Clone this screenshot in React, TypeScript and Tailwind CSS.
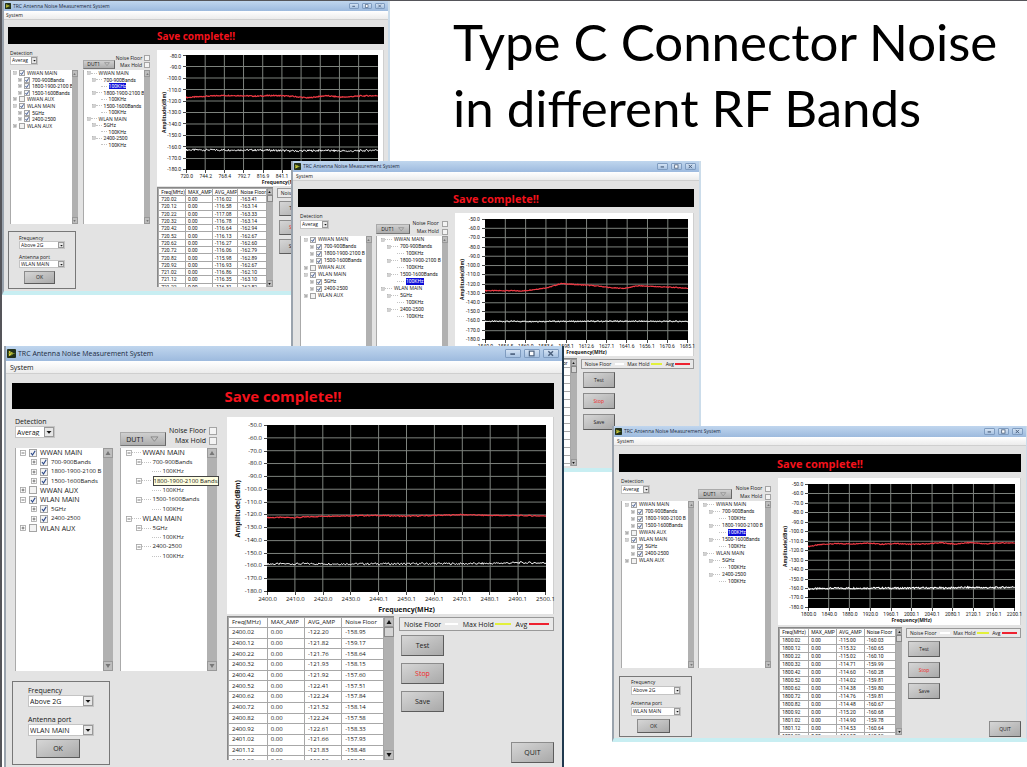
import { useId } from "react"
import clsx from "clsx"

type Size = "sm" | "md" | "lg"

type Reading = [avg: string, noise: string]

interface Capture {
  id: string
  size: Size
  frame: string
  chart: string
  plot: string
  listHeight: string
  firstFreq: number
  yLabels: string[]
  xLabels: string[]
  avgTrace: number[]
  noiseTrace: number[]
  jitter: number
  readings: Reading[]
  selected?: number
  tooltip?: number
}

// One set of measurements per zoom level of the captured window
const sizes = {
  lg: {
    text: "text-[7px] leading-[9px]",
    num: "text-[6px] leading-[9px]",
    title: "h-[15px] pl-[1px] gap-[2px]",
    titleButton: "w-[16px] h-[9px]",
    logo: "size-[9px]",
    menu: "h-[13px] pl-[4px]",
    body: "pl-[6px] pr-[8px] pt-[9px]",
    banner: "h-[26px] text-[15px]",
    columns: "mt-[8px] gap-[10px]",
    lists: "gap-[7px] pl-[3px]",
    listHead: "h-[31px]",
    detection: "w-[40px] h-[12px]",
    dut: "w-[46px] h-[14px] text-[7px] mb-[2px]",
    flags: "pt-[9px] gap-[1px]",
    flag: "gap-[3px]",
    box: "size-[8px]",
    leftTree: "h-[85px] pl-[4px]",
    rightTree: "h-[113px] pl-[5px]",
    treeIndent: "w-[10px]",
    treeGap: "gap-[3px]",
    stub: "w-[9px]",
    expander: "size-[6px]",
    scroll: "w-[10px]",
    scrollButton: "h-[10px]",
    port: "mt-[10px] h-[84px] pl-[15px] pt-[4px]",
    portSelect: "w-[66px] h-[12px]",
    portGap: "mt-[8px]",
    ok: "w-[44px] h-[19px] mt-[3px] ml-[8px]",
    chart: "pt-[8px] pr-[7px]",
    gutter: "w-[40px]",
    ampLabel: "w-[14px] ml-[4px]",
    xLabels: "ml-[40px] h-[13px]",
    xTitle: "ml-[40px]",
    lower: "mt-[2px] h-[147px] gap-[5px]",
    tableBox: "h-[144px]",
    table: "h-[150px]",
    cell: "pl-[3px]",
    legend: "h-[14px] mt-[1px] px-[4px]",
    buttons: "mt-[4px] ml-[2px] gap-[7px]",
    button: "w-[43px] h-[21px] text-[7px]",
  },
  md: {
    text: "text-[5px] leading-[7px]",
    num: "font-['Roboto','Open_Sans',sans-serif] text-[5px] leading-[7px]",
    title: "h-[11px] pl-[1px] gap-[2px]",
    titleButton: "w-[11px] h-[7px]",
    logo: "size-[7px]",
    menu: "h-[9px] pl-[3px]",
    body: "px-[5px] pt-[8px]",
    banner: "h-[18px] text-[11px]",
    columns: "mt-[6px] gap-[7px]",
    lists: "gap-[4px] pl-[2px]",
    listHead: "h-[23px]",
    detection: "w-[29px] h-[9px]",
    dut: "w-[34px] h-[10px] text-[5px] mb-[2px]",
    flags: "pt-[7px] gap-[1px]",
    flag: "gap-[3px]",
    box: "size-[6px]",
    leftTree: "h-[63px] pl-[3px]",
    rightTree: "h-[84px] pl-[4px]",
    treeIndent: "w-[6px]",
    treeGap: "gap-[2px]",
    stub: "w-[7px]",
    expander: "size-[4px]",
    scroll: "w-[6px]",
    scrollButton: "h-[7px]",
    port: "mt-[8px] h-[61px] pl-[11px] pt-[2px]",
    portSelect: "w-[50px] h-[9px]",
    portGap: "mt-[5px]",
    ok: "w-[33px] h-[14px] mt-[3px] ml-[6px]",
    chart: "pt-[6px] pr-[5px]",
    gutter: "w-[30px]",
    ampLabel: "w-[9px] ml-[4px]",
    xLabels: "ml-[30px] h-[9px]",
    xTitle: "ml-[30px]",
    lower: "mt-[2px] h-[110px] gap-[4px]",
    tableBox: "h-[108px]",
    table: "h-[111px]",
    cell: "pl-[2px]",
    legend: "h-[10px] mt-[1px] px-[3px]",
    buttons: "mt-[3px] ml-[2px] gap-[5px]",
    button: "w-[32px] h-[16px] text-[5px]",
  },
  sm: {
    text: "text-[5px] leading-[6px]",
    num: "font-['Roboto','Open_Sans',sans-serif] text-[5px] leading-[6px]",
    title: "h-[10px] pl-[1px] gap-[2px]",
    titleButton: "w-[10px] h-[6px]",
    logo: "size-[6px]",
    menu: "h-[9px] pl-[2px]",
    body: "px-[4px] pt-[7px]",
    banner: "h-[17px] text-[10px]",
    columns: "mt-[6px] gap-[7px]",
    lists: "gap-[5px] pl-[2px]",
    listHead: "h-[20px]",
    detection: "w-[28px] h-[9px]",
    dut: "w-[32px] h-[9px] text-[5px] mb-[1px]",
    flags: "pt-[5px] gap-[1px]",
    flag: "gap-[2px]",
    box: "size-[6px]",
    leftTree: "h-[59px] pl-[2px]",
    rightTree: "h-[78px] pl-[3px]",
    treeIndent: "w-[5px]",
    treeGap: "gap-[2px]",
    stub: "w-[6px]",
    expander: "size-[4px]",
    scroll: "w-[6px]",
    scrollButton: "h-[7px]",
    port: "mt-[7px] h-[58px] pl-[10px] pt-[3px]",
    portSelect: "w-[46px] h-[8px]",
    portGap: "mt-[5px]",
    ok: "w-[31px] h-[13px] mt-[3px] ml-[5px]",
    chart: "pt-[5px] pr-[5px]",
    gutter: "w-[29px]",
    ampLabel: "w-[9px] ml-[3px]",
    xLabels: "ml-[29px] h-[9px]",
    xTitle: "ml-[29px]",
    lower: "mt-[1px] h-[101px] gap-[4px]",
    tableBox: "h-[100px]",
    table: "h-[103px]",
    cell: "pl-[2px]",
    legend: "h-[10px] mt-[1px] px-[3px]",
    buttons: "mt-[3px] ml-[2px] gap-[4px]",
    button: "w-[31px] h-[15px] text-[5px]",
  },
}

type Sizes = (typeof sizes)["lg"]

const fullScale = [50, 60, 70, 80, 90, 100, 110, 120, 130, 140, 150, 160, 170, 180].map((v) => `-${v}.0`)

const captures: Capture[] = [
  {
    id: "720",
    size: "sm",
    frame: "left-[2px] top-[1px] w-[388px] h-[294px]",
    chart: "h-[136px]",
    plot: "h-[115px]",
    listHeight: "h-[154px]",
    firstFreq: 720.02,
    yLabels: fullScale.slice(3),
    xLabels: ["720.0", "744.2", "768.4", "792.7", "816.9", "841.1", "865.3", "889.5", "913.8", "938.0", "962.2"],
    avgTrace: [-117, -116, -115.2, -115.3, -115.8, -115.2, -115.8, -117.3, -115.4, -116.7, -115.6, -115.4],
    noiseTrace: [-162.5, -162.6, -162.6, -162.8, -163.5, -163, -163.6, -162.6],
    jitter: 0.9,
    readings: [
      ["-116.02", "-163.41"],
      ["-116.58", "-163.14"],
      ["-117.08", "-163.33"],
      ["-116.78", "-163.14"],
      ["-116.64", "-162.94"],
      ["-116.13", "-162.67"],
      ["-116.27", "-162.60"],
      ["-116.06", "-162.79"],
      ["-115.98", "-162.89"],
      ["-116.93", "-162.67"],
      ["-116.86", "-162.10"],
      ["-116.35", "-163.10"],
      ["-116.31", "-162.82"],
    ],
    selected: 2,
  },
  {
    id: "1500",
    size: "md",
    frame: "left-[291px] top-[161px] w-[410px] h-[311px]",
    chart: "h-[143px]",
    plot: "h-[121px]",
    listHeight: "h-[165px]",
    firstFreq: 1540.02,
    yLabels: fullScale,
    xLabels: ["1540.0", "1554.5", "1569.0", "1583.6", "1598.1", "1612.6", "1627.1", "1641.6", "1656.1", "1670.6", "1685.1"],
    avgTrace: [-127, -127, -127, -127.3, -125.5, -123.5, -119.3, -120.3, -121, -122.2, -124, -124.5, -121.8, -122.3, -123, -123.5, -124.5],
    noiseTrace: [-160, -160, -160, -160, -159.8, -160, -160],
    jitter: 0.8,
    readings: Array.from({ length: 13 }, () => ["", ""] as Reading),
    selected: 6,
  },
  {
    id: "2400",
    size: "lg",
    frame: "left-[4px] top-[346px] w-[560px] h-[430px]",
    chart: "h-[197px]",
    plot: "h-[167px]",
    listHeight: "h-[223px]",
    firstFreq: 2400.02,
    yLabels: fullScale,
    xLabels: ["2400.0", "2410.0", "2420.0", "2430.0", "2440.1", "2450.1", "2460.1", "2470.1", "2480.1", "2490.1", "2500.1"],
    avgTrace: [-122, -122, -121, -120.6, -120.4, -121, -120.4, -119.8, -120.4, -120.5, -120.8],
    noiseTrace: [-158.2, -158.1, -158, -158.1, -158, -158.1, -157.9, -158, -157.8, -157.2, -157.4],
    jitter: 0.8,
    readings: [
      ["-122.20", "-158.95"],
      ["-121.82", "-159.17"],
      ["-121.76", "-158.64"],
      ["-121.93", "-158.15"],
      ["-121.92", "-157.60"],
      ["-122.41", "-157.51"],
      ["-122.24", "-157.84"],
      ["-121.52", "-158.14"],
      ["-122.24", "-157.58"],
      ["-122.61", "-158.33"],
      ["-121.66", "-157.93"],
      ["-121.83", "-158.48"],
      ["-122.50", "-158.91"],
    ],
    tooltip: 3,
  },
  {
    id: "1800",
    size: "md",
    frame: "left-[612px] top-[426px] w-[416px] h-[316px]",
    chart: "h-[147px]",
    plot: "h-[124px]",
    listHeight: "h-[167px]",
    firstFreq: 1800.02,
    yLabels: fullScale,
    xLabels: ["1800.0", "1840.0", "1880.0", "1920.0", "1960.1", "2000.1", "2040.1", "2080.1", "2120.1", "2160.1", "2200.1"],
    avgTrace: [-115.5, -113.2, -112.5, -112.8, -111.8, -113.2, -112.4, -113.2, -112.8, -111.6, -113, -111.4, -112.8, -111.8, -111.8],
    noiseTrace: [-160, -159.3, -159.2, -159, -159.2, -158.9, -159, -158.4, -158.8, -158],
    jitter: 0.9,
    readings: [
      ["-115.00", "-160.03"],
      ["-115.32", "-160.65"],
      ["-115.02", "-160.10"],
      ["-114.71", "-159.99"],
      ["-114.60", "-160.28"],
      ["-114.02", "-159.81"],
      ["-114.38", "-159.80"],
      ["-114.76", "-159.81"],
      ["-114.48", "-160.67"],
      ["-115.20", "-160.68"],
      ["-114.90", "-159.78"],
      ["-114.53", "-160.64"],
      ["-114.98", "-160.12"],
    ],
    selected: 4,
  },
]

const bands = [
  { level: 0, label: "WWAN MAIN", checked: true },
  { level: 1, label: "700-900Bands", checked: true },
  { level: 1, label: "1800-1900-2100 B", checked: true },
  { level: 1, label: "1500-1600Bands", checked: true },
  { level: 0, label: "WWAN AUX", checked: false },
  { level: 0, label: "WLAN MAIN", checked: true },
  { level: 1, label: "5GHz", checked: true },
  { level: 1, label: "2400-2500", checked: true },
  { level: 0, label: "WLAN AUX", checked: false },
]

const ports = [
  { level: 0, label: "WWAN MAIN" },
  { level: 1, label: "700-900Bands" },
  { level: 2, label: "100KHz" },
  { level: 1, label: "1800-1900-2100 B" },
  { level: 2, label: "100KHz" },
  { level: 1, label: "1500-1600Bands" },
  { level: 2, label: "100KHz" },
  { level: 0, label: "WLAN MAIN" },
  { level: 1, label: "5GHz" },
  { level: 2, label: "100KHz" },
  { level: 1, label: "2400-2500" },
  { level: 2, label: "100KHz" },
]

// Smooth curve through the given levels with a repeatable measurement jitter
function tracePoints(levels: number[], top: number, bottom: number, jitter: number) {
  const steps = 280
  return Array.from({ length: steps + 1 }, (_, i) => {
    const pos = (i / steps) * (levels.length - 1)
    const k = Math.min(Math.floor(pos), levels.length - 2)
    const level = levels[k] + (levels[k + 1] - levels[k]) * (pos - k)
    const noise = Math.sin(i * 12.9898) * 43758.5453
    const value = level + (noise - Math.floor(noise) - 0.5) * 2 * jitter
    return `${((i / steps) * 100).toFixed(2)},${(((top - value) / (top - bottom)) * 100).toFixed(2)}`
  }).join(" ")
}

function Expander({ s, open }: { s: Sizes; open: boolean }) {
  return (
    <svg viewBox="0 0 6 6" className={clsx("shrink-0", s.expander)}>
      <rect x="0.5" y="0.5" width="5" height="5" fill="#fff" stroke="#a3a3a3" strokeWidth="0.8" />
      <path d={open ? "M1.5 3h3" : "M1.5 3h3M3 1.5v3"} stroke="#555" strokeWidth="0.8" />
    </svg>
  )
}

function CheckBox({ s, id, checked }: { s: Sizes; id: string; checked?: boolean }) {
  return (
    <span className={clsx("grid shrink-0", s.box)}>
      <input
        id={id}
        type="checkbox"
        defaultChecked={checked}
        className="peer col-start-1 row-start-1 size-full appearance-none border border-[#a4a4a4] bg-[#f3f3f3]"
      />
      <svg viewBox="0 0 8 8" className="pointer-events-none invisible col-start-1 row-start-1 size-full peer-checked:visible">
        <path d="M2 4l1.5 2L6.2 1.8" fill="none" stroke="#2d4a8a" strokeWidth="1.2" />
      </svg>
    </span>
  )
}

function ScrollBar({ s, thumb }: { s: Sizes; thumb?: boolean }) {
  const button = clsx("flex w-full items-center justify-center border border-[#999] bg-[#bdbdbd] p-0", s.scrollButton)
  return (
    <div className={clsx("flex shrink-0 flex-col bg-[#b1b1b1]", s.scroll)}>
      <button aria-label="Scroll up" className={button}>
        <svg viewBox="0 0 6 6" className="size-3/4">
          <path d="M3 1L5.5 5H.5z" fill={thumb ? "#111" : "#777"} />
        </svg>
      </button>
      {thumb && <div className={clsx("w-full border border-[#888] bg-[#d4d4d4]", s.scrollButton)} />}
      <div className="flex-1" />
      <button aria-label="Scroll down" className={button}>
        <svg viewBox="0 0 6 6" className="size-3/4">
          <path d="M3 5L.5 1h5z" fill={thumb ? "#111" : "#777"} />
        </svg>
      </button>
    </div>
  )
}

function DropDown({ s, id, value, className }: { s: Sizes; id: string; value: string; className: string }) {
  return (
    <div className={clsx("grid border border-[#c4c4c4] bg-white", className)}>
      <select id={id} className="col-start-1 row-start-1 h-full w-full appearance-none pl-[1px] leading-none">
        <option>{value}</option>
      </select>
      <span
        className={clsx(
          "pointer-events-none col-start-1 row-start-1 flex items-center justify-center justify-self-end border border-[#999] bg-[#e6e6e6]",
          s.scroll
        )}
      >
        <svg viewBox="0 0 6 6" className="w-3/4">
          <path d="M.5 2h5L3 4.8z" fill="#111" />
        </svg>
      </span>
    </div>
  )
}

function PushButton({ label, className, danger }: { label: string; className: string; danger?: boolean }) {
  return (
    <button
      className={clsx(
        "flex items-center justify-center border border-t-[#8c8c8c] border-r-[#5c5c5c] border-b-[#5c5c5c] border-l-[#8c8c8c] bg-linear-to-br from-[#d6d6d6] to-[#a9a9a9] leading-none",
        danger ? "text-[#f02a2a]" : "text-[#1c1c1c]",
        className
      )}
    >
      {label}
    </button>
  )
}

function BandList({ s, height, id }: { s: Sizes; height: string; id: string }) {
  return (
    <div className={clsx("flex border-l border-[#aaa] bg-white", height)}>
      <ul className={clsx("grid min-w-0 flex-1 auto-rows-fr overflow-hidden", s.leftTree)}>
        {bands.map((band, i) => (
          <li key={band.label} className={clsx("flex items-center whitespace-nowrap", s.treeGap, band.level > 0 && s.num)}>
            {band.level > 0 && <span className={clsx("-mr-[2px] shrink-0", s.treeIndent)} />}
            <Expander s={s} open={band.level === 0 && band.checked} />
            <CheckBox s={s} id={`${id}-band-${i}`} checked={band.checked} />
            <label htmlFor={`${id}-band-${i}`}>{band.label}</label>
          </li>
        ))}
      </ul>
      <ScrollBar s={s} />
    </div>
  )
}

function PortTree({ s, capture }: { s: Sizes; capture: Capture }) {
  return (
    <div className={clsx("flex border-l border-[#aaa] bg-white", capture.listHeight)}>
      <ul className={clsx("grid min-w-0 flex-1 auto-rows-fr", s.rightTree)}>
        {ports.map((port, i) => (
          <li key={i} className={clsx("flex min-w-0 items-center whitespace-nowrap", port.level > 0 && s.num)}>
            {port.level > 0 && <span className={clsx("shrink-0", s.treeIndent)} />}
            {port.level > 1 && <span className={clsx("shrink-0", s.treeIndent)} />}
            {port.level < 2 ? <Expander s={s} open /> : <span className={clsx("shrink-0", s.expander)} />}
            <span className={clsx("mr-[2px] shrink-0 border-t border-dotted border-[#c4c4c4]", s.stub)} />
            {i === capture.tooltip ? (
              <span className="relative z-10 border border-[#444] bg-[#ffffe1] leading-[8px]">1800-1900-2100 Bands</span>
            ) : (
              <span className={clsx(i === capture.selected && "bg-[#0b0bd8] text-white")}>{port.label}</span>
            )}
          </li>
        ))}
      </ul>
      <ScrollBar s={s} />
    </div>
  )
}

function Chart({ s, capture }: { s: Sizes; capture: Capture }) {
  const { yLabels, xLabels } = capture
  const top = Number(yLabels[0])
  const bottom = Number(yLabels[yLabels.length - 1])
  return (
    <figure className={clsx("border-r border-[#cfcfcf] bg-white", s.chart, capture.chart)}>
      <div className={clsx("flex", capture.plot)}>
        <div className={clsx("flex shrink-0", s.gutter)}>
          <div className={clsx("flex items-center justify-center", s.ampLabel)}>
            <span className="rotate-180 font-bold [writing-mode:vertical-rl]">Amplitude(dBm)</span>
          </div>
          <div className={clsx("flex flex-1 flex-col justify-between", s.num)}>
            {yLabels.map((y) => (
              <div key={y} className="flex h-px items-center justify-end gap-[2px]">
                {y}
                <span className="h-px w-[3px] bg-[#444]" />
              </div>
            ))}
          </div>
        </div>
        <svg viewBox="0 0 100 100" preserveAspectRatio="none" className="h-full min-w-0 flex-1 bg-black">
          {yLabels.slice(1, -1).map((y, i) => (
            <path
              key={y}
              d={`M0 ${((i + 1) * 100) / (yLabels.length - 1)}h100`}
              stroke="#7d827d"
              vectorEffect="non-scaling-stroke"
            />
          ))}
          {xLabels.slice(1, -1).map((x, i) => (
            <path key={x} d={`M${(i + 1) * 10} 0v100`} stroke="#7d827d" vectorEffect="non-scaling-stroke" />
          ))}
          <polyline
            points={tracePoints(capture.avgTrace, top, bottom, capture.jitter * 0.5)}
            fill="none"
            stroke="#ee3a44"
            strokeWidth="1.2"
            vectorEffect="non-scaling-stroke"
          />
          <polyline
            points={tracePoints(capture.noiseTrace, top, bottom, capture.jitter)}
            fill="none"
            stroke="#fff"
            vectorEffect="non-scaling-stroke"
          />
        </svg>
      </div>
      <div className={clsx("flex justify-between", s.xLabels, s.num)}>
        {xLabels.map((x) => (
          <div key={x} className="flex w-px flex-col items-center">
            <span className="h-[3px] w-px shrink-0 bg-[#444]" />
            {x}
          </div>
        ))}
      </div>
      <figcaption className={clsx("text-center font-bold", s.xTitle)}>Frequency(MHz)</figcaption>
    </figure>
  )
}

function ReadingTable({ s, capture }: { s: Sizes; capture: Capture }) {
  const cell = clsx("overflow-hidden border border-[#a8a8a8] py-0 pr-0 text-left font-normal whitespace-nowrap", s.cell)
  return (
    <div className={clsx("flex overflow-hidden border-t border-l border-[#888] bg-white", s.tableBox)}>
      <table className={clsx("min-w-0 flex-1 table-fixed border-collapse", s.num, s.table)}>
        <colgroup>
          <col className="w-[25%]" />
          <col className="w-[24%]" />
          <col className="w-[24%]" />
          <col className="w-[27%]" />
        </colgroup>
        <thead>
          <tr>
            {["Freq(MHz)", "MAX_AMP", "AVG_AMP", "Noise Floor"].map((h) => (
              <th key={h} className={cell}>
                {h}
              </th>
            ))}
          </tr>
        </thead>
        <tbody>
          {capture.readings.map(([avg, noise], i) => (
            <tr key={i}>
              <td className={cell}>{(capture.firstFreq + i / 10).toFixed(2)}</td>
              <td className={cell}>0.00</td>
              <td className={cell}>{avg}</td>
              <td className={cell}>{noise}</td>
            </tr>
          ))}
        </tbody>
      </table>
      <ScrollBar s={s} thumb />
    </div>
  )
}

function Legend({ s }: { s: Sizes }) {
  return (
    <div className={clsx("flex items-center justify-between border border-[#999] bg-[#e9e9e9] whitespace-nowrap", s.legend)}>
      <span>Noise Floor</span>
      <span className="h-[2px] w-[9%] bg-white" />
      <span>Max Hold</span>
      <span className="-ml-[2%] h-[2px] w-[11%] bg-[#e2f03c]" />
      <span>Avg</span>
      <span className="-ml-[2%] h-[2px] w-[14%] bg-[#ee2230]" />
    </div>
  )
}

function TitleBar({ s }: { s: Sizes }) {
  const button = clsx(
    "flex items-center justify-center rounded-[1px] border border-[#7f9cc0] bg-linear-to-b from-[#d3e2f3] to-[#a9c3e2]",
    s.titleButton
  )
  return (
    <header className={clsx("flex items-center bg-linear-to-b from-[#c0d6ee] to-[#9dbade]", s.title)}>
      <svg viewBox="0 0 10 10" className={s.logo}>
        <rect width="10" height="10" rx="1" fill="#22301a" />
        <path d="M2 2l6 3-6 3z" fill="#e9d73b" />
        <path d="M1 5h2l1-2 1 4 1-2h3" fill="none" stroke="#5f7f2a" strokeWidth="0.8" />
      </svg>
      <span className="text-[#1b2a40]">TRC Antenna Noise Measurement System</span>
      <div className="mr-[3px] ml-auto flex gap-[3px]">
        <button aria-label="Minimize" className={button}>
          <svg viewBox="0 0 8 6" className="h-full">
            <path d="M2 3.5h4" stroke="#4a5f7c" strokeWidth="1.4" />
          </svg>
        </button>
        <button aria-label="Maximize" className={button}>
          <svg viewBox="0 0 8 6" className="h-full">
            <rect x="2" y="1" width="4" height="4" fill="#fff" stroke="#4a5f7c" />
          </svg>
        </button>
        <button aria-label="Close" className={button}>
          <svg viewBox="0 0 8 6" className="h-full">
            <path d="M2 1l4 4M6 1L2 5" stroke="#4a5f7c" strokeWidth="1.2" />
          </svg>
        </button>
      </div>
    </header>
  )
}

function CaptureWindow({ capture }: { capture: Capture }) {
  const s = sizes[capture.size]
  const id = useId()
  return (
    <section
      className={clsx(
        "absolute overflow-hidden border-r-2 border-b-4 border-l-2 border-b-[#c8eef2] border-l-[#9aa3ad] bg-[#e3e3e3] text-[#161616]",
        capture.size === "lg" ? "border-r-[#20394f]" : "border-r-[#cbdcea]",
        capture.frame,
        s.text
      )}
    >
      <TitleBar s={s} />
      <nav className={clsx("flex items-center border-b border-[#cfcfcf] bg-linear-to-b from-white to-[#ececec]", s.menu)}>
        <button>System</button>
      </nav>
      <div className={s.body}>
        <div className={clsx("flex items-center justify-center bg-black leading-none font-bold text-[#f3121c]", s.banner)}>
          Save complete!!
        </div>

        <div className={clsx("grid grid-cols-[205fr_327fr]", s.columns)}>
          <div className="min-w-0">
            <div className={clsx("grid grid-cols-2", s.lists)}>
              <div className="min-w-0">
                <div className={s.listHead}>
                  <label htmlFor={`${id}-detection`} className="block">
                    Detection
                  </label>
                  <DropDown s={s} id={`${id}-detection`} value="Averag" className={s.detection} />
                </div>
                <BandList s={s} height={capture.listHeight} id={id} />
              </div>
              <div className="min-w-0">
                <div className={clsx("flex items-end justify-between", s.listHead)}>
                  <button
                    className={clsx(
                      "flex shrink-0 items-center justify-evenly border border-t-[#aaa] border-r-[#666] border-b-[#777] border-l-[#aaa] bg-linear-to-b from-[#cfcfcf] to-[#adadad] leading-none",
                      s.dut
                    )}
                  >
                    DUT1
                    <svg viewBox="0 0 10 7" className="w-1/5">
                      <path d="M1 1h8L5 6z" fill="#c4c4c4" stroke="#777" strokeWidth="0.8" />
                    </svg>
                  </button>
                  <div className={clsx("flex flex-col items-end self-start whitespace-nowrap", s.flags)}>
                    <label className={clsx("flex items-center", s.flag)}>
                      Noise Floor
                      <CheckBox s={s} id={`${id}-noise`} />
                    </label>
                    <label className={clsx("flex items-center", s.flag)}>
                      Max Hold
                      <CheckBox s={s} id={`${id}-max`} />
                    </label>
                  </div>
                </div>
                <PortTree s={s} capture={capture} />
              </div>
            </div>

            <div className={clsx("w-[48%] border border-[#777]", s.port)}>
              <label htmlFor={`${id}-frequency`} className="block">
                Frequency
              </label>
              <DropDown s={s} id={`${id}-frequency`} value="Above 2G" className={s.portSelect} />
              <label htmlFor={`${id}-port`} className={clsx("block", s.portGap)}>
                Antenna port
              </label>
              <DropDown s={s} id={`${id}-port`} value="WLAN MAIN" className={s.portSelect} />
              <PushButton label="OK" className={s.ok} />
            </div>
          </div>

          <div className="min-w-0">
            <Chart s={s} capture={capture} />
            <div className={clsx("grid grid-cols-[167fr_155fr]", s.lower)}>
              <ReadingTable s={s} capture={capture} />
              <div className="flex min-w-0 flex-col">
                <Legend s={s} />
                <div className={clsx("flex flex-col", s.buttons)}>
                  <PushButton label="Test" className={s.button} />
                  <PushButton label="Stop" className={s.button} danger />
                  <PushButton label="Save" className={s.button} />
                </div>
                <PushButton label="QUIT" className={clsx("mt-auto self-end", s.button)} />
              </div>
            </div>
          </div>
        </div>
      </div>
    </section>
  )
}

export default function App() {
  return (
    <main className="relative h-screen overflow-hidden bg-white font-['Open_Sans','Noto_Sans',sans-serif] shadow-[inset_2px_1px_0_#55555a]">
      <h1 className="ml-[453px] pt-[9px] font-['Lato','Open_Sans',sans-serif] text-[51px] leading-[66px] whitespace-nowrap text-black">
        Type C Connector Noise
        <br />
        in different RF Bands
      </h1>
      {captures.map((capture) => (
        <CaptureWindow key={capture.id} capture={capture} />
      ))}
    </main>
  )
}
